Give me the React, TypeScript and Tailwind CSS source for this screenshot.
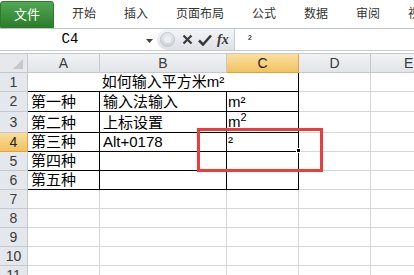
import React from "react";
import clsx from "clsx";

const tabs = ["开始", "插入", "页面布局", "公式", "数据", "审阅", "视图"];

const cjk = "font-['Liberation_Sans','Noto_Sans_CJK_SC',sans-serif]";

type Row = {
  n: number;
  h: string;
  cells?: React.ReactNode[];
};

const rows: Row[] = [
  { n: 1, h: "h-[19px]" },
  { n: 2, h: "h-[20px]", cells: ["第一种", "输入法输入", "m²"] },
  {
    n: 3,
    h: "h-[21px]",
    cells: [
      "第二种",
      "上标设置",
      <span key="m2">
        m<span className="relative -top-[6px] text-[11px]">2</span>
      </span>,
    ],
  },
  { n: 4, h: "h-[19px]", cells: ["第三种", "Alt+0178", "²"] },
  { n: 5, h: "h-[19px]", cells: ["第四种", "", ""] },
  { n: 6, h: "h-[19px]", cells: ["第五种", "", ""] },
  { n: 7, h: "h-[19px]" },
  { n: 8, h: "h-[19px]" },
  { n: 9, h: "h-[19px]" },
  { n: 10, h: "h-[19px]" },
  { n: 11, h: "h-[19px]" },
];

const colWidths = ["w-[72px]", "w-[127px]", "w-[72px]"];

function RowHeader({ n, active }: { n: number; active?: boolean }) {
  return (
    <div
      className={clsx(
        "w-[28px] shrink-0 flex items-center justify-center border-r border-b text-[14px] font-['Liberation_Sans',sans-serif]",
        active
          ? "bg-gradient-to-b from-[#f9dc9c] to-[#f1c25f] border-[#e2a23c] text-[#222]"
          : "bg-[#e4e7ec] border-[#c5c8cc] text-[#3a3a3a]"
      )}
    >
      {n}
    </div>
  );
}

function Cell({
  w,
  dark,
  children,
  pad = "pl-[3px]",
}: {
  w: string;
  dark?: boolean;
  children?: React.ReactNode;
  pad?: string;
}) {
  return (
    <div
      className={clsx(
        "shrink-0 flex items-end border-r border-b text-[15px] leading-[18px] text-black whitespace-nowrap",
        w,
        pad,
        dark ? "border-black" : "border-[#d6d6d6]"
      )}
    >
      {children}
    </div>
  );
}

export default function App() {
  return (
    <div className={clsx("relative w-[414px] h-[275px] overflow-hidden bg-white", cjk)}>
      {/* Ribbon tabs */}
      <div className="flex h-[29px] border-b border-[#bfc4ca] bg-white">
        <div className="mt-[1px] w-[54px] h-[27px] shrink-0 rounded-t-[3px] border border-[#2d7a2d] bg-gradient-to-b from-[#52a852] to-[#2b7d2b] text-white text-[13px] flex items-center justify-center">
          文件
        </div>
        <div className="ml-[4px] flex min-w-0 flex-1 overflow-hidden">
          {tabs.map((t) => (
            <div
              key={t}
              className="px-[14px] shrink-0 whitespace-nowrap flex items-center text-[12px] text-[#333]"
            >
              {t}
            </div>
          ))}
        </div>
      </div>

      {/* Formula bar */}
      <div className="flex h-[22px] border-b border-[#c6c9ce]">
        <div className="relative w-[157px] flex items-center">
          <span className="w-[140px] text-center text-[14px] font-['Liberation_Mono',monospace] text-black">
            C4
          </span>
          <svg className="absolute left-[146px] top-[10px]" width="7" height="4" viewBox="0 0 7 4">
            <path d="M0 0H7L3.5 4Z" fill="#444" />
          </svg>
        </div>
        <div className="relative w-[78px] flex items-center rounded-l-[11px] bg-gradient-to-b from-[#f3f5f8] to-[#dde1e6] border-r border-[#c9ccd1]">
          <div className="ml-[3px] w-[15px] h-[15px] rounded-full bg-gradient-to-b from-[#e8eaed] to-[#cfd3d8] border border-[#c3c7cc] flex items-center justify-center">
            <div className="w-[7px] h-[7px] rounded-full bg-[#eef0f2]" />
          </div>
          <svg className="ml-[7px]" width="11" height="11" viewBox="0 0 11 11">
            <path d="M1.5 1.5L9.5 9.5M9.5 1.5L1.5 9.5" stroke="#3a3a3a" strokeWidth="2.2" />
          </svg>
          <svg className="ml-[5px]" width="14" height="12" viewBox="0 0 14 12">
            <path d="M1 6.5L5 10.5L13 1.5" stroke="#3a3a3a" strokeWidth="2.6" fill="none" />
          </svg>
          <span className="ml-[5px] text-[14px] italic font-bold font-['Liberation_Serif',serif] text-[#3a3a3a] leading-none">
            fx
          </span>
        </div>
        <div className="flex-1 pl-[13px] pt-[2px] text-[11px] text-black">²</div>
      </div>

      <div className="h-[2px] bg-white" />

      {/* Column headers */}
      <div className="flex h-[20px] border-t border-[#c6c9ce] font-['Liberation_Sans',sans-serif] text-[14px] text-[#3a3a3a]">
        <div className="relative w-[28px] shrink-0 border-r border-b border-[#c5c8cc] bg-[#e6e8eb]">
          <svg className="absolute right-[4px] bottom-[3px]" width="10" height="10" viewBox="0 0 10 10">
            <path d="M10 0V10H0Z" fill="#c6c8cb" />
          </svg>
        </div>
        {["A", "B", "C", "D"].map((c, i) => (
          <div
            key={c}
            className={clsx(
              "shrink-0 flex items-center justify-center border-r border-b",
              i === 1 ? "w-[127px]" : "w-[72px]",
              c === "C"
                ? "bg-gradient-to-b from-[#fae09f] to-[#f2c35f] border-[#e2a23c] text-[#222]"
                : "bg-gradient-to-b from-[#f1f2f4] to-[#e2e4e8] border-[#c5c8cc]"
            )}
          >
            {c}
          </div>
        ))}
        <div className="flex-1 flex items-center pl-[33px] border-b border-[#c5c8cc] bg-gradient-to-b from-[#f1f2f4] to-[#e2e4e8]">
          E
        </div>
      </div>

      {/* Grid rows */}
      {rows.map((r) => (
        <div key={r.n} className={clsx("flex", r.h)}>
          <RowHeader n={r.n} active={r.n === 4} />
          {r.n === 1 ? (
            <div className="w-[271px] shrink-0 flex items-end justify-center border-r border-b border-black text-[15px] leading-[18px] text-black">
              如何输入平方米m²
            </div>
          ) : r.cells ? (
            r.cells.map((c, i) => (
              <Cell key={i} w={colWidths[i]} dark pad={i === 2 ? "pl-[1px]" : "pl-[3px]"}>
                {c}
              </Cell>
            ))
          ) : (
            colWidths.map((w, i) => <Cell key={i} w={w} />)
          )}
          <Cell w="w-[72px]" />
          <div className="flex-1 border-b border-[#d6d6d6]" />
        </div>
      ))}

      {/* Fill handle on C4 */}
      <div className="absolute left-[296px] top-[148px] w-[5px] h-[5px] bg-black border border-white" />

      {/* Red annotation box */}
      <div className="absolute left-[197px] top-[128px] w-[126px] h-[44px] border-[3px] border-[#f03b3b]" />
    </div>
  );
}
